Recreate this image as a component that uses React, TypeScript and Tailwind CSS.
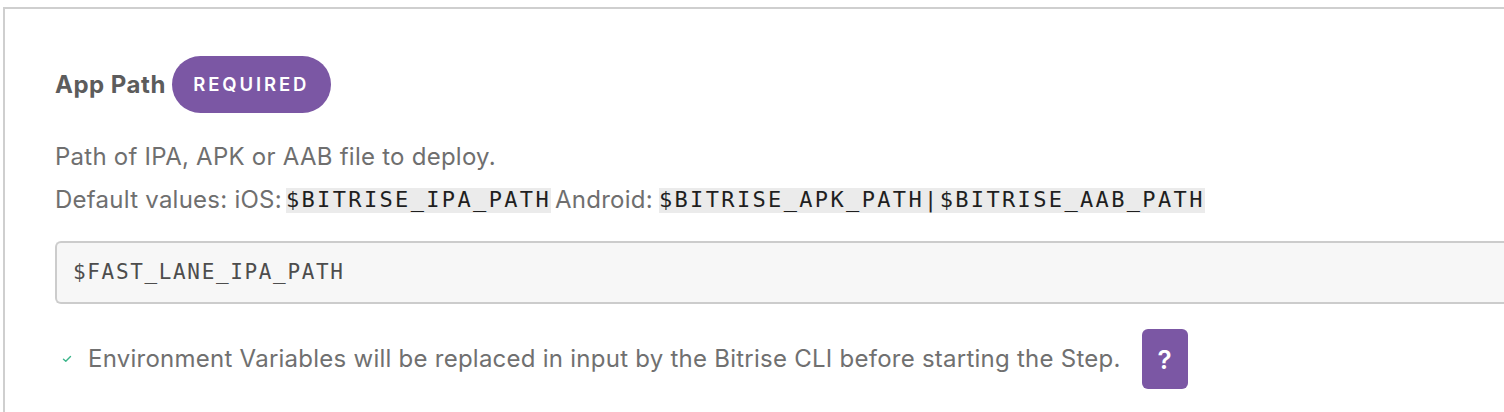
import React from "react";

const Code = ({ children }: { children: React.ReactNode }) => (
  <code className="bg-[#ebebeb] h-[25px] inline-flex items-center font-['DejaVu_Sans_Mono',monospace] text-[22px] tracking-[2.35px] text-[#1f1f1f] leading-none">
    {children}
  </code>
);

export default function App() {
  return (
    <div className="w-[1504px] h-[412px] bg-white overflow-hidden font-['Inter',sans-serif]">
      <div className="ml-[3px] mt-[7px] border-t-2 border-l-2 border-[#cfcfcf] pl-[50px] pt-[47px] h-[405px]">
        <div className="flex items-center h-[57px]">
          <span className="text-[24px] font-bold tracking-[0.5px] text-[#5c5c5c]">App Path</span>
          <span className="ml-[6px] h-[57px] w-[159px] rounded-full bg-[#7b57a4] text-white text-[18.5px] font-semibold tracking-[2.9px] flex items-center justify-center">
            REQUIRED
          </span>
        </div>

        <p className="mt-[29px] h-[30px] leading-[30px] text-[24px] tracking-[0.25px] text-[#6f6f6f]">
          Path of IPA, APK or AAB file to deploy.
        </p>

        <p className="mt-[13px] h-[30px] flex items-center text-[24px] tracking-[0.25px] text-[#6f6f6f]">
          <span className="mr-[4px]">Default values: iOS:</span>
          <Code>$BITRISE_IPA_PATH</Code>
          <span className="ml-[4px] mr-[6px]">Android:</span>
          <Code>$BITRISE_APK_PATH|$BITRISE_AAB_PATH</Code>
        </p>

        <div className="mt-[26px] h-[63px] border-2 border-r-0 border-[#cccccc] rounded-l-[6px] bg-[#f7f7f7] flex items-center pl-[16px]">
          <span className="font-['DejaVu_Sans_Mono',monospace] text-[21px] tracking-[1.65px] text-[#4d4d4d]">
            $FAST_LANE_IPA_PATH
          </span>
        </div>

        <div className="mt-[25px] h-[60px] flex items-center">
          <svg width="10" height="8" viewBox="0 0 10 8" className="ml-[7px]" fill="none">
            <path d="M1.5 4.2 L3.8 6.2 L8.5 1.5" stroke="#3bb58a" strokeWidth="1.4" strokeLinecap="round" strokeLinejoin="round" />
          </svg>
          <span className="ml-[16px] text-[24px] tracking-[0.25px] text-[#707070]">
            Environment Variables will be replaced in input by the Bitrise CLI before starting the Step.
          </span>
          <button className="ml-[21px] w-[46px] h-[60px] rounded-[6px] bg-[#7b57a4] text-white text-[26px] font-semibold flex items-center justify-center">
            ?
          </button>
        </div>
      </div>
    </div>
  );
}
